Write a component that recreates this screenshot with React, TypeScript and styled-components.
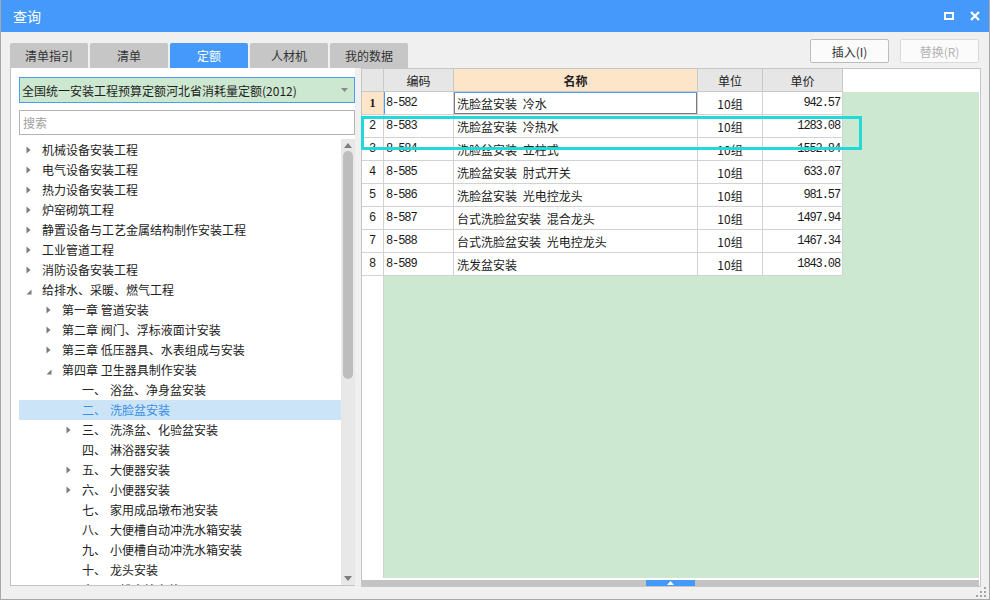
import styled, { createGlobalStyle } from "styled-components";

// styles for the 查询 dialog

const GlobalStyle = createGlobalStyle`
  html, body {
    margin: 0;
    padding: 0;
    background: #ffffff;
  }
  body {
    font-family: "Noto Sans CJK SC", "Noto Sans", sans-serif;
  }
  * {
    box-sizing: border-box;
  }
`;

const Window = styled.div`
  position: relative;
  width: 990px;
  height: 600px;
  display: flex;
  flex-direction: column;
  background: #f0f0f0;
  border: 1px solid #a8a8a8;
  border-top: none;
  overflow: hidden;
`;

const TitleBar = styled.div`
  height: 32px;
  flex-shrink: 0;
  display: flex;
  align-items: center;
  justify-content: space-between;
  padding: 0 9px 0 12px;
  background: #4499fa;
  color: #ffffff;
  font-size: 14px;
`;

const TitleControls = styled.div`
  display: flex;
  align-items: center;
  gap: 16px;
`;

const TopRow = styled.div`
  height: 36px;
  flex-shrink: 0;
  display: flex;
  align-items: flex-end;
  padding: 0 10px 0 9px;
`;

const Tabs = styled.div`
  display: flex;
  gap: 2px;
`;

const Tab = styled.div<{ $active?: boolean }>`
  width: 78px;
  height: 25px;
  display: flex;
  align-items: center;
  justify-content: center;
  border-radius: 2px 2px 0 0;
  font-size: 12px;
  background: ${(p) => (p.$active ? "#4499fa" : "#c6c6c6")};
  color: ${(p) => (p.$active ? "#ffffff" : "#333333")};
`;

const ButtonGroup = styled.div`
  margin-left: auto;
  margin-bottom: 5px;
  display: flex;
  gap: 11px;
`;

const ActionButton = styled.button<{ $disabled?: boolean }>`
  width: 79px;
  height: 24px;
  padding: 0;
  font-family: inherit;
  font-size: 12px;
  border-radius: 2px;
  background: #fbfbfb;
  border: 1px solid ${(p) => (p.$disabled ? "#dadada" : "#bdbdbd")};
  color: ${(p) => (p.$disabled ? "#b2b2b2" : "#333333")};
`;

const Main = styled.div`
  height: 519px;
  flex-shrink: 0;
  display: flex;
  gap: 6px;
  padding-left: 9px;
`;

const LeftPanel = styled.div`
  width: 345px;
  height: 518px;
  display: flex;
  flex-direction: column;
  padding: 9px 0 0 8px;
  background: #ffffff;
  border-left: 1px solid #c4c4c4;
  border-bottom: 1px solid #c4c4c4;
`;

const Dropdown = styled.div`
  height: 26px;
  flex-shrink: 0;
  display: flex;
  align-items: center;
  justify-content: space-between;
  padding: 0 6px 0 2px;
  background: #cde8d0;
  border: 1px solid #4a9cf8;
  font-size: 12px;
  color: #1e1e1e;
`;

const SearchBox = styled.input`
  height: 25px;
  flex-shrink: 0;
  margin-top: 7px;
  padding: 0 3px;
  border: 1px solid #b4b4b4;
  font-family: inherit;
  font-size: 12px;
  outline: none;

  &::placeholder {
    color: #a0a0a0;
  }
`;

const Tree = styled.div`
  flex: 1;
  min-height: 0;
  margin-top: 4px;
  display: flex;
`;

const TreeList = styled.div`
  flex: 1;
  overflow: hidden;
  padding-top: 1px;
`;

const TreeRow = styled.div<{ $level: number; $selected?: boolean }>`
  height: 20px;
  display: flex;
  align-items: center;
  padding-left: ${(p) => 4 + p.$level * 20}px;
  font-size: 12px;
  line-height: 20px;
  white-space: nowrap;
  background: ${(p) => (p.$selected ? "#cce4f7" : "transparent")};
  color: ${(p) => (p.$selected ? "#3a8ee6" : "#222222")};
`;

const ArrowBox = styled.span`
  width: 19px;
  flex-shrink: 0;
  display: flex;
  align-items: center;
  padding-left: 3px;
`;

const ItemNum = styled.span`
  display: inline-block;
  min-width: 28px;
  padding-right: 2px;
`;

const ScrollTrack = styled.div`
  width: 14px;
  flex-shrink: 0;
  display: flex;
  flex-direction: column;
  align-items: center;
  background: #e8e8e8;
  padding: 4px 0;
`;

const ScrollThumb = styled.div`
  width: 10px;
  height: 228px;
  margin-top: 3px;
  border-radius: 5px;
  background: #bdbdbd;
`;

const ScrollSpacer = styled.div`
  flex: 1;
`;

const TablePanel = styled.div`
  width: 620px;
  height: 519px;
  display: flex;
  flex-direction: column;
  padding-right: 1px;
  background: #ffffff;
  border: 1px solid #c6c6c6;
`;

const COLUMNS = "22px 70px 244px 65px 80px";

const GridRow = styled.div`
  display: grid;
  grid-template-columns: ${COLUMNS};
  height: 23px;
`;

const HeaderCell = styled.div<{ $accent?: boolean }>`
  display: flex;
  align-items: center;
  justify-content: center;
  font-size: 12px;
  font-weight: ${(p) => (p.$accent ? 700 : 400)};
  color: #222222;
  background: ${(p) => (p.$accent ? "#fde5c9" : "#e6e6e6")};
  border-right: 1px solid #c8c8c8;
  border-bottom: 1px solid #c8c8c8;
`;

const GridBody = styled.div`
  flex: 1;
  background: linear-gradient(
    to right,
    #ffffff 0 21px,
    #d2d2d2 21px 22px,
    #cde8d0 22px
  );
`;

const Cell = styled.div<{
  $align?: "left" | "center" | "right";
  $mono?: boolean;
  $current?: boolean;
  $marker?: boolean;
}>`
  display: flex;
  align-items: center;
  justify-content: ${(p) =>
    p.$align === "right" ? "flex-end" : p.$align === "center" ? "center" : "flex-start"};
  padding: 0 ${(p) => (p.$mono ? "2px" : "3px")};
  font-family: ${(p) =>
    p.$mono ? '"Liberation Mono", "DejaVu Sans Mono", monospace' : "inherit"};
  font-size: 12px;
  letter-spacing: ${(p) => (p.$mono ? "-1.1px" : "0")};
  word-spacing: ${(p) => (p.$mono ? "0" : "3px")};
  color: #1a1a1a;
  white-space: pre;
  background: #ffffff;
  border-right: 1px solid #d2d2d2;
  border-bottom: 1px solid #d2d2d2;
  box-shadow: ${(p) =>
    p.$current
      ? "inset 0 1px 0 #4a9cf8, inset -1px -1px 0 #7a7a7a, inset 1px 0 0 #7a7a7a"
      : p.$marker
      ? "inset 1px 0 0 #4a9cf8"
      : "none"};
`;

const RowNumCell = styled(Cell)<{ $active?: boolean }>`
  justify-content: center;
  padding: 0;
  letter-spacing: 0;
  font-family: ${(p) =>
    p.$active ? '"Liberation Serif", serif' : '"Liberation Mono", monospace'};
  font-size: 12px;
  font-weight: ${(p) => (p.$active ? 700 : 400)};
  background: ${(p) => (p.$active ? "#fde5c9" : "#ffffff")};
`;

const HScroll = styled.div`
  height: 6px;
  flex-shrink: 0;
  margin-top: 2px;
  display: flex;
  justify-content: center;
  background: #c3c3c3;
`;

const SplitHandle = styled.div`
  width: 49px;
  display: flex;
  align-items: center;
  justify-content: center;
  background: #4499fa;
`;

const BottomBar = styled.div`
  flex: 1;
  display: flex;
  justify-content: flex-end;
  align-items: flex-end;
  padding: 0 3px 2px 0;
`;

const Highlight = styled.div`
  position: absolute;
  left: 360px;
  top: 116px;
  width: 501px;
  height: 34px;
  border: 3px solid #22d8d8;
  pointer-events: none;
`;

type TreeNode = {
  level: number;
  state: "open" | "closed" | "leaf";
  label: string;
  num?: string;
  selected?: boolean;
};

const treeData: TreeNode[] = [
  { level: 0, state: "closed", label: "机械设备安装工程" },
  { level: 0, state: "closed", label: "电气设备安装工程" },
  { level: 0, state: "closed", label: "热力设备安装工程" },
  { level: 0, state: "closed", label: "炉窑砌筑工程" },
  { level: 0, state: "closed", label: "静置设备与工艺金属结构制作安装工程" },
  { level: 0, state: "closed", label: "工业管道工程" },
  { level: 0, state: "closed", label: "消防设备安装工程" },
  { level: 0, state: "open", label: "给排水、采暖、燃气工程" },
  { level: 1, state: "closed", label: "第一章 管道安装" },
  { level: 1, state: "closed", label: "第二章 阀门、浮标液面计安装" },
  { level: 1, state: "closed", label: "第三章 低压器具、水表组成与安装" },
  { level: 1, state: "open", label: "第四章 卫生器具制作安装" },
  { level: 2, state: "leaf", num: "一、", label: "浴盆、净身盆安装" },
  { level: 2, state: "leaf", num: "二、", label: "洗脸盆安装", selected: true },
  { level: 2, state: "closed", num: "三、", label: "洗涤盆、化验盆安装" },
  { level: 2, state: "leaf", num: "四、", label: "淋浴器安装" },
  { level: 2, state: "closed", num: "五、", label: "大便器安装" },
  { level: 2, state: "closed", num: "六、", label: "小便器安装" },
  { level: 2, state: "leaf", num: "七、", label: "家用成品墩布池安装" },
  { level: 2, state: "leaf", num: "八、", label: "大便槽自动冲洗水箱安装" },
  { level: 2, state: "leaf", num: "九、", label: "小便槽自动冲洗水箱安装" },
  { level: 2, state: "leaf", num: "十、", label: "龙头安装" },
  { level: 2, state: "leaf", num: "十一、", label: "排水栓安装" },
];

const rows = [
  { code: "8-582", name: "洗脸盆安装 冷水", unit: "10组", price: "942.57" },
  { code: "8-583", name: "洗脸盆安装 冷热水", unit: "10组", price: "1283.08" },
  { code: "8-584", name: "洗脸盆安装 立柱式", unit: "10组", price: "1552.84" },
  { code: "8-585", name: "洗脸盆安装 肘式开关", unit: "10组", price: "633.07" },
  { code: "8-586", name: "洗脸盆安装 光电控龙头", unit: "10组", price: "981.57" },
  { code: "8-587", name: "台式洗脸盆安装 混合龙头", unit: "10组", price: "1497.94" },
  { code: "8-588", name: "台式洗脸盆安装 光电控龙头", unit: "10组", price: "1467.34" },
  { code: "8-589", name: "洗发盆安装", unit: "10组", price: "1843.08" },
];

function TreeArrow({ state }: { state: TreeNode["state"] }) {
  if (state === "leaf") return null;
  if (state === "open") {
    return (
      <svg width="6" height="6" viewBox="0 0 6 6" style={{ marginTop: 3 }}>
        <path d="M5.5 0.5 L5.5 5.5 L0.5 5.5 Z" fill="#7a7a7a" />
      </svg>
    );
  }
  return (
    <svg width="5" height="8" viewBox="0 0 5 8">
      <path d="M0.5 0.5 L4.5 4 L0.5 7.5 Z" fill="#7a7a7a" />
    </svg>
  );
}

export default function App() {
  return (
    <>
      <GlobalStyle />
      <Window>
        <TitleBar>
          <span>查询</span>
          <TitleControls>
            <svg width="10" height="8" viewBox="0 0 10 8">
              <rect x="1" y="1" width="8" height="6" fill="none" stroke="#fff" strokeWidth="2" />
            </svg>
            <svg width="10" height="10" viewBox="0 0 10 10">
              <path d="M1 1 L9 9 M9 1 L1 9" stroke="#fff" strokeWidth="2.2" />
            </svg>
          </TitleControls>
        </TitleBar>

        <TopRow>
          <Tabs>
            <Tab>清单指引</Tab>
            <Tab>清单</Tab>
            <Tab $active>定额</Tab>
            <Tab>人材机</Tab>
            <Tab>我的数据</Tab>
          </Tabs>
          <ButtonGroup>
            <ActionButton>插入(I)</ActionButton>
            <ActionButton $disabled>替换(R)</ActionButton>
          </ButtonGroup>
        </TopRow>

        <Main>
          <LeftPanel>
            <Dropdown>
              <span>全国统一安装工程预算定额河北省消耗量定额(2012)</span>
              <svg width="7" height="4" viewBox="0 0 7 4">
                <path d="M0 0 L7 0 L3.5 4 Z" fill="#8a8a8a" />
              </svg>
            </Dropdown>
            <SearchBox placeholder="搜索" />
            <Tree>
              <TreeList>
                {treeData.map((node, i) => (
                  <TreeRow key={i} $level={node.level} $selected={node.selected}>
                    <ArrowBox>
                      <TreeArrow state={node.state} />
                    </ArrowBox>
                    {node.num && <ItemNum>{node.num}</ItemNum>}
                    <span>{node.label}</span>
                  </TreeRow>
                ))}
              </TreeList>
              <ScrollTrack>
                <svg width="8" height="5" viewBox="0 0 8 5">
                  <path d="M0 5 L4 0 L8 5 Z" fill="#7d7d7d" />
                </svg>
                <ScrollThumb />
                <ScrollSpacer />
                <svg width="8" height="5" viewBox="0 0 8 5">
                  <path d="M0 0 L8 0 L4 5 Z" fill="#7d7d7d" />
                </svg>
              </ScrollTrack>
            </Tree>
          </LeftPanel>

          <TablePanel>
            <GridRow>
              <HeaderCell />
              <HeaderCell>编码</HeaderCell>
              <HeaderCell $accent>名称</HeaderCell>
              <HeaderCell>单位</HeaderCell>
              <HeaderCell>单价</HeaderCell>
            </GridRow>
            <GridBody>
              {rows.map((row, i) => (
                <GridRow key={row.code}>
                  <RowNumCell $active={i === 0}>{i + 1}</RowNumCell>
                  <Cell $mono $marker={i === 0}>
                    {row.code}
                  </Cell>
                  <Cell $current={i === 0}>{row.name}</Cell>
                  <Cell $align="center">{row.unit}</Cell>
                  <Cell $align="right" $mono>
                    {row.price}
                  </Cell>
                </GridRow>
              ))}
            </GridBody>
            <HScroll>
              <SplitHandle>
                <svg width="7" height="4" viewBox="0 0 7 4">
                  <path d="M0 4 L3.5 0 L7 4 Z" fill="#fff" />
                </svg>
              </SplitHandle>
            </HScroll>
          </TablePanel>
        </Main>

        <BottomBar>
          <svg width="10" height="10" viewBox="0 0 10 10">
            <rect x="8" y="0" width="2" height="2" fill="#a4a4a4" />
            <rect x="4" y="4" width="2" height="2" fill="#a4a4a4" />
            <rect x="8" y="4" width="2" height="2" fill="#a4a4a4" />
            <rect x="0" y="8" width="2" height="2" fill="#a4a4a4" />
            <rect x="4" y="8" width="2" height="2" fill="#a4a4a4" />
            <rect x="8" y="8" width="2" height="2" fill="#a4a4a4" />
          </svg>
        </BottomBar>

        <Highlight />
      </Window>
    </>
  );
}
